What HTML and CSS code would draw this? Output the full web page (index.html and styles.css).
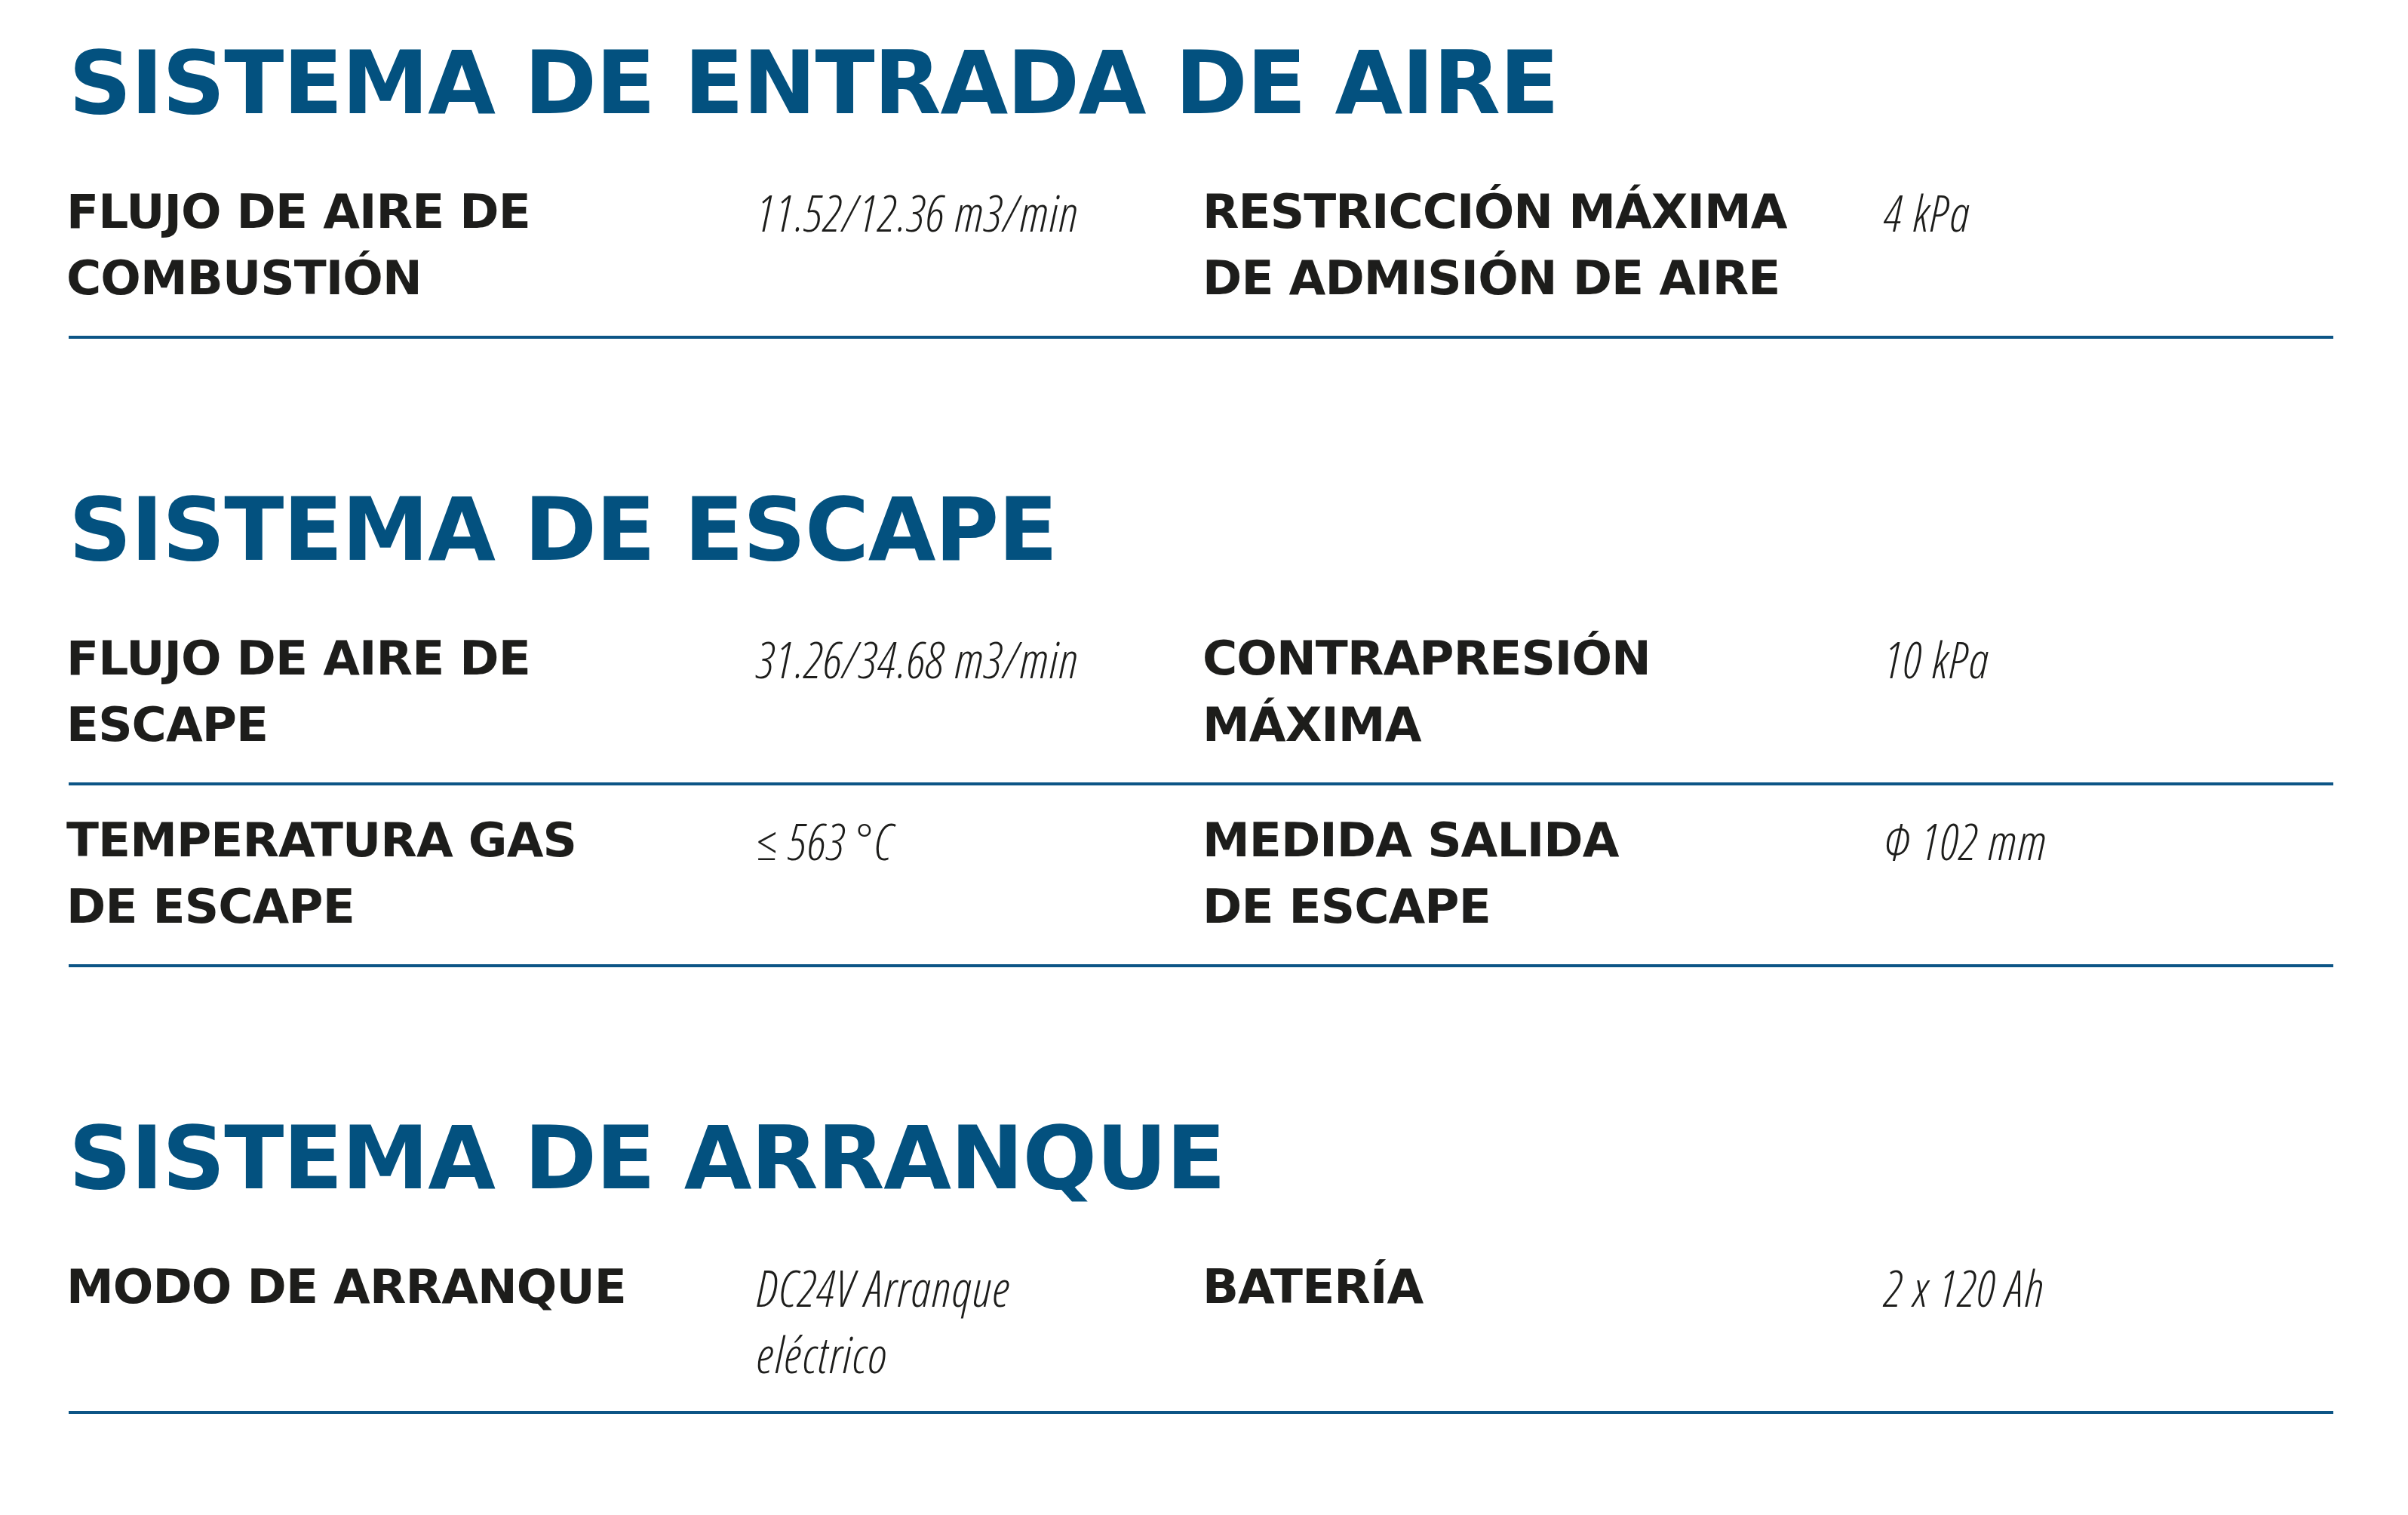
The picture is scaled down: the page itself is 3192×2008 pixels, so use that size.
FILE: index.html
```html
<!DOCTYPE html>
<html lang="es">
<head>
<meta charset="utf-8">
<title>Especificaciones</title>
<link rel="stylesheet" href="styles.css">
</head>
<body>
<main class="page">
  <section class="section">
    <h2 class="title">SISTEMA DE ENTRADA DE AIRE</h2>
    <div class="row">
      <div class="label">FLUJO DE AIRE DE<br>COMBUSTIÓN</div>
      <div class="value">11.52/12.36 m3/min</div>
      <div class="label">RESTRICCIÓN MÁXIMA<br>DE ADMISIÓN DE AIRE</div>
      <div class="value">4 kPa</div>
    </div>
  </section>
  <section class="section">
    <h2 class="title">SISTEMA DE ESCAPE</h2>
    <div class="row">
      <div class="label">FLUJO DE AIRE DE<br>ESCAPE</div>
      <div class="value">31.26/34.68 m3/min</div>
      <div class="label">CONTRAPRESIÓN<br>MÁXIMA</div>
      <div class="value">10 kPa</div>
    </div>
    <div class="row">
      <div class="label">TEMPERATURA GAS<br>DE ESCAPE</div>
      <div class="value">≤ 563 °C</div>
      <div class="label">MEDIDA SALIDA<br>DE ESCAPE</div>
      <div class="value">Φ 102 mm</div>
    </div>
  </section>
  <section class="section">
    <h2 class="title">SISTEMA DE ARRANQUE</h2>
    <div class="row">
      <div class="label">MODO DE ARRANQUE</div>
      <div class="value">DC24V Arranque<br>eléctrico</div>
      <div class="label">BATERÍA</div>
      <div class="value">2 x 120 Ah</div>
    </div>
  </section>
</main>
</body>
</html>
```
FILE: styles.css
```css
* { box-sizing: border-box; }
html, body { margin: 0; padding: 0; background: #ffffff; }
.page {
  width: 3192px;
  padding: 52px 99px 0 91px;
}
.section + .section { margin-top: 195px; }
.title {
  margin: 0 0 69px;
  font-family: "DejaVu Sans", sans-serif;
  font-weight: 700;
  font-size: 116px;
  line-height: 116px;
  letter-spacing: -1.3px;
  color: #03517f;
}
.row {
  display: grid;
  grid-template-columns: 912px 594px 901px 1fr;
  padding-bottom: 32px;
  border-bottom: 4px solid #0d5586;
}
.row + .row { padding-top: 29px; }
.label {
  margin-left: -3px;
  font-family: "DejaVu Sans", sans-serif;
  font-weight: 700;
  font-size: 63px;
  line-height: 88px;
  letter-spacing: -0.9px;
  color: #1d1d1b;
}
.value {
  font-family: "Open Sans", sans-serif;
  font-style: italic;
  font-weight: 300;
  font-stretch: 75%;
  font-size: 66px;
  line-height: 88px;
  letter-spacing: 1.5px;
  color: #1d1d1b;
}
```
